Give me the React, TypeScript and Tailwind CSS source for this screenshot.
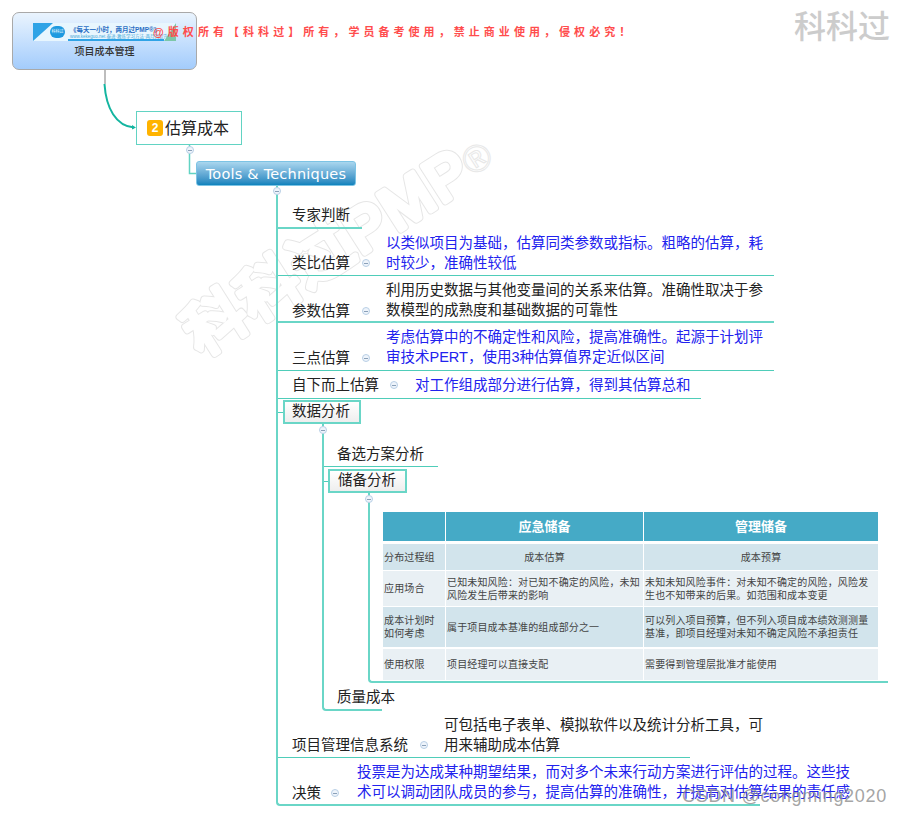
const cjk = "font-['Liberation_Sans','Noto_Sans_CJK_SC',sans-serif]";

const BLUE = "text-[#2222ee]";

// collapse toggle on a branch
const Toggle = ({ className = "" }: { className?: string }) => (
  <span className={`w-[8px] h-[8px] shrink-0 rounded-full border border-[#b9cfe6] bg-[#eef4fb] flex items-center justify-center ${className}`}>
    <span className="block w-[4px] h-px bg-[#8aa0b8]" />
  </span>
);

const Connectors = () => (
  <svg className="absolute inset-0" width="900" height="817" fill="none">
    <path d="M105 70V84" stroke="#bdbdbd" strokeWidth="2" />
    <path d="M104.500 84C106 108 116 126 134 127.500" stroke="#14b5a0" strokeWidth="2" />
    <path d="M132 125L136 127.500L132 129.500Z" fill="#14b5a0" />
    <path d="M189.500 145V173.500H196" stroke="#62d3c3" strokeWidth="1.500" />
  </svg>
);

const Watermark = () => (
  <svg className="absolute inset-0" width="900" height="817">
    <g transform="translate(201 357) rotate(-32.500)" fontSize="61" fontWeight="400" letterSpacing="2" strokeLinejoin="round">
      <text fill="none" stroke="#e6e6e6" strokeWidth="7.500">科科过PMP</text>
      <text fill="#fff" stroke="#fff" strokeWidth="5.500">科科过PMP</text>
    </g>
    <text transform="translate(472 177) rotate(-32.500)" fontSize="38" fill="none" stroke="#e8e8e8" strokeWidth="1">®</text>
  </svg>
);

const Banner = () => (
  <div className="absolute left-[33px] top-[23px] w-[143px] h-[18px] bg-[#e8f6fe] flex items-center overflow-hidden">
    <div className="w-[20px] h-full shrink-0 bg-[#2fa3e6] [clip-path:polygon(0_0,100%_0,0_100%)]" />
    <div className="w-[15px] h-[12px] shrink-0 rounded-full bg-[#1e9ae0] -ml-[3px] text-white text-[4px] leading-[12px] text-center">科科过</div>
    <div className="ml-[5px] flex flex-col">
      <span className="text-[#2c6fc4] text-[6.500px] leading-[9px] font-bold whitespace-nowrap">《每天一小时，两月过PMP®》</span>
      <span className="text-[#49a9d8] text-[4.500px] leading-[6px] whitespace-nowrap">www.kekeguo.net 泰进·教练学习方法·两月的提升</span>
    </div>
    <div className="absolute right-0 bottom-0 w-[12px] h-full bg-[#7cc7a8] [clip-path:polygon(100%_0,100%_100%,0_100%)]" />
    <div className="absolute left-[35px] right-[12px] bottom-0 h-[2px] bg-[#2fa3e6]" />
  </div>
);

const cell = "flex items-center text-[10px] leading-[13px] tracking-[0.150px] text-[#444] px-[1px]";
const head = "h-[29px] bg-[#45aac6] text-white font-bold text-[13px] flex items-center justify-center";

const CostTable = () => (
  <div className="w-[495px] grid grid-cols-[62px_197px_234px] grid-rows-[31px_26px_35px_40px_32px] gap-[1px] text-[#444]">
    <div className={head} />
    <div className={head}>应急储备</div>
    <div className={head}>管理储备</div>

    <div className={`bg-[#d2e4ec] ${cell}`}>分布过程组</div>
    <div className={`bg-[#d2e4ec] ${cell} justify-center`}>成本估算</div>
    <div className={`bg-[#d2e4ec] ${cell} justify-center`}>成本预算</div>

    <div className={`bg-[#e9f0f4] ${cell}`}>应用场合</div>
    <div className={`bg-[#e9f0f4] ${cell}`}>已知未知风险：对已知不确定的风险，未知风险发生后带来的影响</div>
    <div className={`bg-[#e9f0f4] ${cell}`}>未知未知风险事件：对未知不确定的风险，风险发生也不知带来的后果。如范围和成本变更</div>

    <div className={`bg-[#d2e4ec] ${cell}`}>成本计划时如何考虑</div>
    <div className={`bg-[#d2e4ec] ${cell}`}>属于项目成本基准的组成部分之一</div>
    <div className={`bg-[#d2e4ec] ${cell}`}>可以列入项目预算，但不列入项目成本绩效测测量基准，即项目经理对未知不确定风险不承担责任</div>

    <div className={`mt-[1px] bg-[#e9f0f4] ${cell}`}>使用权限</div>
    <div className={`mt-[1px] bg-[#e9f0f4] ${cell}`}>项目经理可以直接支配</div>
    <div className={`mt-[1px] bg-[#e9f0f4] ${cell}`}>需要得到管理层批准才能使用</div>
  </div>
);

const label = "whitespace-nowrap shrink-0 text-[14.500px] leading-[20px] text-[#222]";
const noteText = "text-[14.500px] leading-[20px]";
const line = "border-[#6ad6c7]";
const thin = "border-[#4fcdb9]";
const boxed = `border-2 ${line} bg-gradient-to-b from-white to-[#eeeeee] h-[24px] shrink-0 flex items-center whitespace-nowrap text-[14.500px] text-[#222]`;

type RowProps = {
  title: string;
  note: string;
  className: string;
  titleClass: string;
  toggleClass: string;
  noteClass: string;
};

const Row = ({ title, note, className, titleClass, toggleClass, noteClass }: RowProps) => (
  <div className={`flex items-end pl-[14px] ${className}`}>
    <div className={`flex items-center shrink-0 ${titleClass}`}>
      <span className={label}>{title}</span>
      <Toggle className={toggleClass} />
    </div>
    <div className={`${noteText} ${noteClass}`}>{note}</div>
  </div>
);

export default function App() {
  return (
    <div className={`relative w-[900px] h-[817px] bg-white overflow-hidden ${cjk}`}>
      <Watermark />
      <Connectors />

      {/* root */}
      <div className="absolute left-[12px] top-[12px] w-[185px] h-[58px] rounded-[7px] border border-[#a9a9a9] bg-gradient-to-b from-[#eaf4fe] to-[#a3ccfc]">
        <div className="mt-[31px] text-center text-[10px] leading-[15px] font-medium text-[#333]">项目成本管理</div>
      </div>
      <Banner />
      <div className="absolute left-[153px] top-[25px] whitespace-nowrap text-[11px] leading-[14px] tracking-[4.050px] font-bold text-[#ff4d4d]">@版权所有【科科过】所有，学员备考使用，禁止商业使用，侵权必究！</div>
      <div className="absolute left-[794px] top-[6px] whitespace-nowrap text-[32px] leading-[42px] font-medium text-[#cccccc]">科科过</div>

      {/* topic */}
      <div className="absolute left-[136px] top-[111px] w-[106px] h-[34px] border border-[#62d3c3] bg-white flex items-center pl-[10px] gap-[2px]">
        <span className="w-[16px] h-[16px] rounded-[3px] bg-[#ffb300] text-white text-[12px] leading-[16px] font-bold text-center">2</span>
        <span className="text-[16px] leading-[20px] text-[#222] pt-[1px]">估算成本</span>
      </div>
      <Toggle className="absolute left-[186px] top-[146px]" />

      <div className="absolute left-[196px] top-[161px] w-[160px] h-[25px] pt-[2px] rounded-[3px] border border-[#7cc3e4] bg-gradient-to-b from-[#a9d6ee] to-[#0a83bd] flex items-center justify-center text-white text-[14.500px] font-['DejaVu_Sans',sans-serif] tracking-[0.200px]">Tools &amp; Techniques</div>

      {/* branches under Tools & Techniques */}
      <div className={`absolute left-[276px] top-[186px] w-[484px] border-l-2 border-b-2 rounded-bl-[4px] ${line} flex flex-col`}>
        <Toggle className="absolute -left-[5px] top-[1px]" />

        <div className={`h-[43px] w-[84px] pl-[14px] pb-[2px] flex items-end border-b-2 ${line}`}>
          <span className={label}>专家判断</span>
        </div>

        <Row
          title="类比估算"
          note="以类似项目为基础，估算同类参数或指标。粗略的估算，耗时较少，准确性较低"
          className={`h-[47px] w-[496px] border-b ${thin}`}
          titleClass="mb-[2px]"
          toggleClass="ml-[12px]"
          noteClass={`ml-[16px] mb-[2px] w-[380px] ${BLUE}`}
        />
        <Row
          title="参数估算"
          note="利用历史数据与其他变量间的关系来估算。准确性取决于参数模型的成熟度和基础数据的可靠性"
          className={`h-[47px] w-[496px] border-b-2 ${line}`}
          titleClass=""
          toggleClass="ml-[12px]"
          noteClass="ml-[16px] mb-[1px] w-[380px] text-[#222]"
        />
        <Row
          title="三点估算"
          note="考虑估算中的不确定性和风险，提高准确性。起源于计划评审技术PERT，使用3种估算值界定近似区间"
          className={`h-[48px] w-[496px] border-b ${thin}`}
          titleClass="mb-[2px]"
          toggleClass="ml-[12px]"
          noteClass={`ml-[16px] mb-[3px] w-[380px] ${BLUE}`}
        />
        <Row
          title="自下而上估算"
          note="对工作组成部分进行估算，得到其估算总和"
          className={`h-[28px] w-[423px] border-b ${thin}`}
          titleClass="mb-[3px]"
          toggleClass="ml-[11px]"
          noteClass={`ml-[17px] mb-[3px] whitespace-nowrap ${BLUE}`}
        />

        {/* 数据分析 */}
        <div className="pt-[1px] flex items-center">
          <div className="w-[5px] h-[1px] shrink-0 bg-[#4fcdb9]" />
          <div className={`${boxed} w-[78px] pl-[7px]`}>数据分析</div>
        </div>
        <div className={`relative ml-[44px] w-[60px] border-l-2 border-b-2 rounded-bl-[4px] ${line} flex flex-col`}>
          <Toggle className="absolute -left-[5px] top-[2px]" />
          <div className={`h-[43px] w-[114px] pl-[13px] pb-[2px] flex items-end border-b ${thin}`}>
            <span className={label}>备选方案分析</span>
          </div>
          <div className="pt-[2px] flex items-center">
            <div className="w-[4px] h-[1px] shrink-0 bg-[#4fcdb9]" />
            <div className={`${boxed} w-[79px] pl-[8px]`}>储备分析</div>
          </div>
          <div className={`relative ml-[44px] w-[520px] h-[190px] shrink-0 pt-[19px] pl-[13px] border-l-2 border-b-2 rounded-bl-[4px] ${line}`}>
            <Toggle className="absolute -left-[5px] top-[2px]" />
            <CostTable />
          </div>
          <div className="h-[26px] pl-[13px] pb-[2px] flex items-end">
            <span className={label}>质量成本</span>
          </div>
        </div>

        <Row
          title="项目管理信息系统"
          note="可包括电子表单、模拟软件以及统计分析工具，可用来辅助成本估算"
          className={`h-[47px] w-[412px] border-b ${thin}`}
          titleClass="mb-[2px]"
          toggleClass="ml-[12px]"
          noteClass="ml-[16px] mb-[2px] w-[325px] shrink-0 text-[#222]"
        />
        <Row
          title="决策"
          note="投票是为达成某种期望结果，而对多个未来行动方案进行评估的过程。这些技术可以调动团队成员的参与，提高估算的准确性，并提高对估算结果的责任感"
          className="h-[46px] w-[600px]"
          titleClass="mb-[1px]"
          toggleClass="ml-[10px]"
          noteClass={`ml-[18px] mb-[2px] w-[500px] shrink-0 ${BLUE}`}
        />
      </div>

      <div className="absolute left-[682px] top-[785px] whitespace-nowrap text-[18px] leading-[22px] tracking-[0.700px] font-['Liberation_Sans',sans-serif] text-[#8c8c8c]/80">CSDN @congming2020</div>
    </div>
  );
}
